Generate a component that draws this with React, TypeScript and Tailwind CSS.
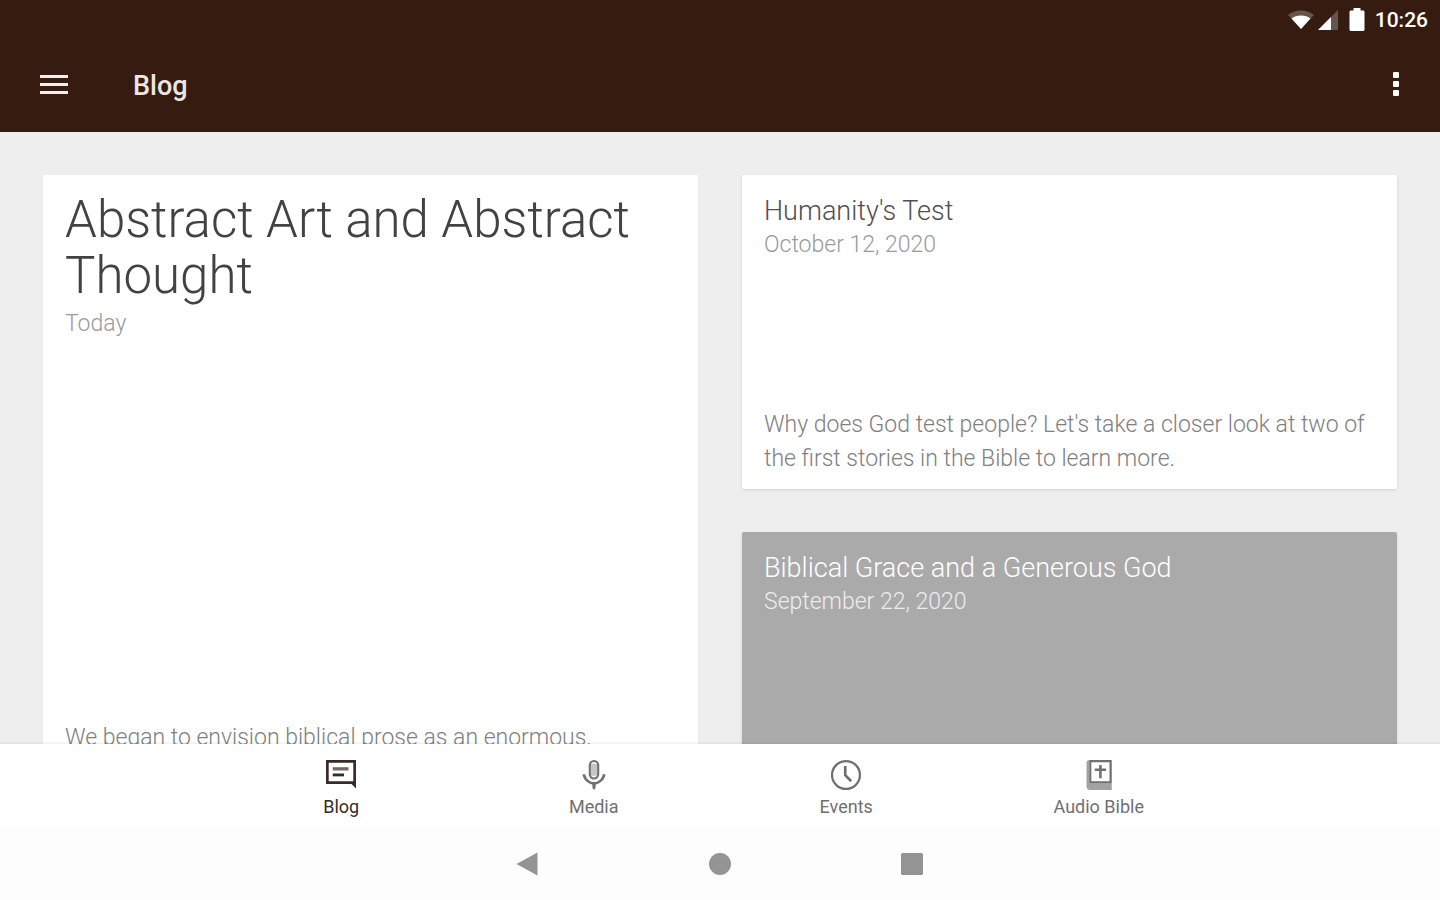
import React from 'react';

interface Post {
  id: string;
  title: string;
  date: string;
  excerpt?: string;
}

interface Tab {
  id: string;
  label: string;
  icon: React.ReactNode;
}

const featured: Post = {
  id: 'abstract-art',
  title: 'Abstract Art and Abstract Thought',
  date: 'Today',
  excerpt: 'We began to envision biblical prose as an enormous,'
};

const humanitysTest: Post = {
  id: 'humanitys-test',
  title: "Humanity's Test",
  date: 'October 12, 2020',
  excerpt: "Why does God test people? Let's take a closer look at two of the first stories in the Bible to learn more."
};

const biblicalGrace: Post = {
  id: 'biblical-grace',
  title: 'Biblical Grace and a Generous God',
  date: 'September 22, 2020'
};

const tabs: Tab[] = [
  {
    id: 'blog',
    label: 'Blog',
    icon: (
      <>
        <path fillRule="evenodd" d="M2 2h20v19l-3-3H2V2zm1.800 1.800v12.400h16.400V3.800H3.800z" />
        <path fillOpacity="0.7" d="M6.500 6.800h10.500v2.200h-10.500z" />
        <path d="M6.500 11h7.500v1.900h-7.500z" />
      </>
    )
  },
  {
    id: 'media',
    label: 'Media',
    icon: (
      <>
        <path
          fillRule="evenodd"
          d="M12 2a3.500 3.500 0 0 1 3.500 3.500v6a3.500 3.500 0 0 1-7 0v-6A3.500 3.500 0 0 1 12 2zm0 1.400a2.100 2.100 0 0 0-2.100 2.100v6a2.100 2.100 0 0 0 4.200 0v-6A2.100 2.100 0 0 0 12 3.400z"
        />
        <path fillOpacity="0.4" d="M9.900 4.500h4.200v8h-4.200z" />
        <path d="M4.300 11.500h1.900c.4 3 2.800 5.200 5.800 5.200s5.400-2.200 5.800-5.200h1.900c-.4 3.400-3 6-6.500 6.800L12.800 21.500h-1.600l-.4-3.200c-3.500-.8-6.100-3.400-6.500-6.800z" />
      </>
    )
  },
  {
    id: 'events',
    label: 'Events',
    icon: (
      <>
        <circle cx="12" cy="12" r="9.300" fill="none" stroke="currentColor" strokeWidth="1.500" />
        <path d="M11.500 6v6.200l4 4" fill="none" stroke="currentColor" strokeWidth="1.800" />
      </>
    )
  },
  {
    id: 'audio-bible',
    label: 'Audio Bible',
    icon: (
      <>
        <path fillOpacity="0.65" d="M5.500 2v15.600h15V22H6C4.500 22 3.700 21 3.700 19.500V3.800C3.700 2.700 4.400 2 5.500 2z" />
        <path fillRule="evenodd" d="M5.500 2h15v15.600h-15V2zm1.400 1.500v12.600h12.100V3.500H6.900z" />
        <path d="M12.100 5.300h1.700v2.400h2.900v1.700h-2.900v4.800h-1.700V9.400H9.200V7.700h2.900z" />
      </>
    )
  }
];

const StatusBar: React.FC = () => (
  <div className="flex h-10 items-center justify-end pr-3 text-white">
    <svg className="h-6 w-7" viewBox="0 0 28 24" fill="currentColor" aria-hidden="true">
      <path fillOpacity="0.25" d="M1 7C4 4.300 9 2.500 14 2.500s10 1.800 13 4.500L14 21z" />
      <path d="M4.500 10.500C7 8.500 10 7.500 14 7.500s7 1 9.500 3L14 21z" />
    </svg>
    <svg className="ml-0.5 h-6 w-6" viewBox="0 0 24 24" fill="currentColor" aria-hidden="true">
      <path fillOpacity="0.25" d="M21 2v20H1z" />
      <path d="M14 9V22H1z" />
    </svg>
    <svg className="ml-2 h-6 w-4" viewBox="0 0 16 24" fill="currentColor" aria-hidden="true">
      <path d="M4.500 0h7v2.500H14c1 0 1.500.6 1.500 1.500v17.500c0 .9-.6 1.500-1.500 1.500H2c-1 0-1.500-.6-1.500-1.500V4c0-.9.600-1.500 1.500-1.500h2.500z" />
    </svg>
    <span className="ml-2.5 text-[21px] leading-6 font-medium">10:26</span>
  </div>
);

const AppBar: React.FC = () => (
  <div className="flex h-[92px] items-center pr-[34px] pb-1 pl-10 text-white">
    <button type="button" aria-label="Menu" className="flex w-7 flex-col gap-[5px]">
      <span className="h-[3px] w-full bg-[#f7ecec]"></span>
      <span className="h-[3px] w-full bg-[#f7ecec]"></span>
      <span className="h-[3px] w-full bg-[#f7ecec]"></span>
    </button>
    <h1 className="ml-[65px] pt-1 text-[27px] leading-8 font-medium text-[#ece6e3]">Blog</h1>
    <button type="button" aria-label="More options" className="ml-auto flex w-5 flex-col items-center gap-[3px]">
      <span className="size-[6px] rounded-[1px] bg-white"></span>
      <span className="size-[6px] rounded-[1px] bg-white"></span>
      <span className="size-[6px] rounded-[1px] bg-white"></span>
    </button>
  </div>
);

const FeaturedCard: React.FC<{ post: Post }> = ({ post }) => (
  <article className="flex min-h-[593px] flex-col bg-white px-[22px] pt-[17px] pb-[13px] shadow-xs">
    <h2 className="text-[51px] leading-14 font-light text-[#424242]">{post.title}</h2>
    <p className="mt-[3px] text-[23px] leading-[33px] font-light text-[#9a9a9a]">{post.date}</p>
    <p className="mt-auto text-[23px] leading-[34px] font-light text-[#808080]">{post.excerpt}</p>
  </article>
);

const PostCard: React.FC<{ post: Post }> = ({ post }) => (
  <article className="flex min-h-[314px] flex-col rounded-xs bg-white px-[22px] pt-5 pb-[13px] shadow-sm">
    <h2 className="text-[27px] leading-[33px] font-light text-[#505050]">{post.title}</h2>
    <p className="text-[23px] leading-[33px] font-light text-[#9a9a9a]">{post.date}</p>
    <p className="mt-auto text-[23px] leading-[34px] font-light text-[#808080]">{post.excerpt}</p>
  </article>
);

const ImageCard: React.FC<{ post: Post }> = ({ post }) => (
  <article className="flex min-h-[314px] flex-col rounded-xs bg-[#aaaaaa] px-[22px] pt-5 pb-[13px] shadow-sm">
    <h2 className="text-[27px] leading-[33px] font-light text-white">{post.title}</h2>
    <p className="text-[23px] leading-[33px] font-light text-[#ededed]">{post.date}</p>
  </article>
);

const TabBar: React.FC = () => (
  <nav className="relative bg-white shadow-[0_-1px_2px_rgba(0,0,0,0.08)]">
    <div className="mx-auto grid h-[84px] w-full max-w-[1010px] grid-cols-4">
      {tabs.map((tab) => (
        <a
          key={tab.id}
          href={`#${tab.id}`}
          className={`flex flex-col items-center pt-[13px] ${tab.id === 'blog' ? 'text-[#3a2a26]' : 'text-[#707070]'}`}
        >
          <svg className="size-9" viewBox="0 0 24 24" fill="currentColor" aria-hidden="true">
            {tab.icon}
          </svg>
          <span className="mt-0.5 text-lg leading-6">{tab.label}</span>
        </a>
      ))}
    </div>
  </nav>
);

const SystemNav: React.FC = () => (
  <div className="bg-[#fdfdfd] text-[#949494]">
    <div className="mx-auto grid h-[72px] w-full max-w-[576px] grid-cols-3 justify-items-center">
      <button type="button" aria-label="Back">
        <svg className="size-6" viewBox="0 0 24 24" fill="currentColor">
          <path d="M0.500 12L21.500 0.500v23z" />
        </svg>
      </button>
      <button type="button" aria-label="Home">
        <svg className="size-6" viewBox="0 0 24 24" fill="currentColor">
          <circle cx="12" cy="12" r="11" />
        </svg>
      </button>
      <button type="button" aria-label="Recent apps">
        <svg className="size-6" viewBox="0 0 24 24" fill="currentColor">
          <rect x="1" y="1" width="22" height="22" rx="1.500" />
        </svg>
      </button>
    </div>
  </div>
);

const App: React.FC = () => {
  return (
    <div className="flex h-screen flex-col bg-[#eeeeee] font-['Roboto',sans-serif]">
      <header className="bg-[#351b10]">
        <StatusBar />
        <AppBar />
      </header>

      <main className="min-h-0 flex-1 overflow-hidden px-[43px] pt-[43px]">
        <div className="grid grid-cols-2 items-start gap-11">
          <FeaturedCard post={featured} />
          <div className="flex flex-col gap-[43px]">
            <PostCard post={humanitysTest} />
            <ImageCard post={biblicalGrace} />
          </div>
        </div>
      </main>

      <TabBar />
      <SystemNav />
    </div>
  );
};

export default App;
